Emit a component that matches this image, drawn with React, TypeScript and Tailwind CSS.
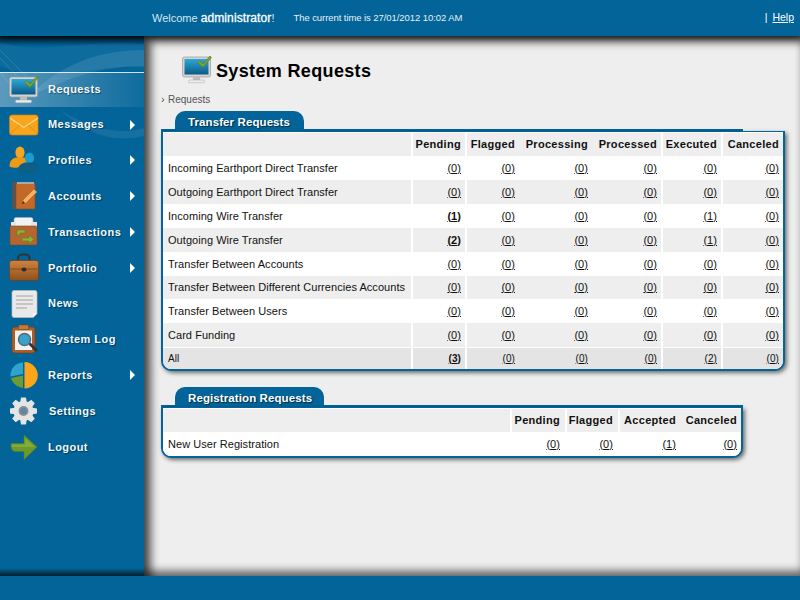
import React from 'react';

// inline icons for the sidebar, drawn on a 30x30 box
const MonitorIcon = ({ id }: { id: string }) => (
  <svg viewBox="0 0 30 30" className="w-full h-full">
    <defs>
      <linearGradient id={id} x1="0" y1="0" x2="0" y2="1">
        <stop offset="0" stopColor="#2ea8d8" />
        <stop offset="1" stopColor="#0b5a86" />
      </linearGradient>
    </defs>
    <rect x="0.5" y="2" width="28" height="20" rx="2" fill="#d4d4d4" stroke="#9a9a9a" strokeWidth="0.7" />
    <rect x="2.5" y="4" width="24" height="15.5" fill={`url(#${id})`} />
    <rect x="11" y="22" width="7" height="3.5" fill="#bdbdbd" />
    <rect x="6.5" y="25" width="16" height="2.8" rx="1" fill="#ececec" stroke="#a8a8a8" strokeWidth="0.5" />
    <path d="M17.5 5.5l3.5 3.5 7-8 1.5 1.5-8.5 10-5.5-5z" fill="#7aa32f" stroke="#4f7320" strokeWidth="0.5" />
  </svg>
);

const MailIcon = () => (
  <svg viewBox="0 0 30 30" className="w-full h-full">
    <rect x="0.5" y="5" width="28.5" height="20" rx="2.5" fill="#f7a51c" stroke="#d97f0c" strokeWidth="0.7" />
    <path d="M1 8l13.7 9.5L29 8" fill="none" stroke="#ffd57a" strokeWidth="1.3" />
    <path d="M1 24l10-9M29 24l-10-9" fill="none" stroke="#e08a12" strokeWidth="0.9" />
  </svg>
);

const UsersIcon = () => (
  <svg viewBox="0 0 30 30" className="w-full h-full">
    <ellipse cx="11" cy="7.5" rx="4.6" ry="6" fill="#f5a623" />
    <path d="M0.5 21c0-6 4-8 6.5-8.5h8c3 .5 4 2 4 4L12 22c-5 1-11 1-11.5-1z" fill="#ef9a16" />
    <ellipse cx="20.5" cy="13" rx="4.6" ry="5.6" fill="#1c9ccf" />
    <path d="M9 25c0-5 4.500-7 7.500-7.500h8c3 .5 5 3 5 7 0 2.500-4 3.500-10 3.500S9 28 9 25z" fill="#0d5f86" />
  </svg>
);

const BookIcon = () => (
  <svg viewBox="0 0 30 30" className="w-full h-full">
    <rect x="3" y="1" width="6" height="27" fill="#555" />
    <rect x="7" y="2" width="19" height="26" rx="1" fill="#c4682a" stroke="#8e4a1b" strokeWidth="0.6" />
    <rect x="8" y="1" width="17" height="2" fill="#a9a9a9" />
    <path d="M13 23l1-4 11-11 3 3-11 11z" fill="#f3b161" stroke="#a8611f" strokeWidth="0.5" />
    <path d="M13 23l1-3 2 2z" fill="#3a2a18" />
  </svg>
);

const TransferIcon = () => (
  <svg viewBox="0 0 30 30" className="w-full h-full">
    <rect x="5" y="0.500" width="19" height="12" rx="2" fill="#f2f2f2" stroke="#aaa" strokeWidth="0.6" />
    <rect x="2" y="5" width="5" height="7" fill="#e5e5e5" />
    <rect x="22" y="5" width="6" height="7" fill="#e5e5e5" />
    <rect x="1" y="9" width="27" height="19" rx="1.500" fill="#b4662e" stroke="#84471c" strokeWidth="0.6" />
    <path d="M8 13h8v3h-5v2H8zM13 21h7v-3l5 4.500-5 4V24h-7z" fill="#8ab33a" stroke="#557a1e" strokeWidth="0.5" />
  </svg>
);

const CaseIcon = ({ id }: { id: string }) => (
  <svg viewBox="0 0 30 30" className="w-full h-full">
    <defs>
      <linearGradient id={id} x1="0" y1="0" x2="0" y2="1">
        <stop offset="0" stopColor="#cf8440" />
        <stop offset="1" stopColor="#8f4f1d" />
      </linearGradient>
    </defs>
    <path d="M9 9V5.500C9 3 11 1.500 13 1.500h3.500C19 1.500 20.500 3 20.500 5.500V9" fill="none" stroke="#333" strokeWidth="1.8" />
    <rect x="0.500" y="7.500" width="29" height="20" rx="2.500" fill={`url(#${id})`} stroke="#6f3c14" strokeWidth="0.7" />
    <path d="M1 16h28" stroke="#7c4418" strokeWidth="0.8" />
    <ellipse cx="15" cy="16.500" rx="2.500" ry="2" fill="#2c2c2c" />
  </svg>
);

const NewsIcon = () => (
  <svg viewBox="0 0 30 30" className="w-full h-full">
    <path d="M3 3.500a2 2 0 012-2h21a2 2 0 012 2v21l-4 4H5a2 2 0 01-2-2z" fill="#e9e9e9" stroke="#bdbdbd" strokeWidth="0.7" />
    <path d="M7 7h17M7 11h17M7 15h17M7 19h11" stroke="#a3a3a3" strokeWidth="1.200" />
    <path d="M24 28.500v-4h4z" fill="#fff" />
  </svg>
);

const LogIcon = () => (
  <svg viewBox="0 0 30 30" className="w-full h-full">
    <rect x="3" y="3" width="23" height="26" rx="3" fill="#aa5e28" stroke="#7b4119" strokeWidth="0.7" />
    <rect x="6" y="6.500" width="17" height="19.500" fill="#f1f1f1" />
    <rect x="9.500" y="1" width="10" height="4.500" rx="1" fill="#c4793a" stroke="#7b4119" strokeWidth="0.5" />
    <path d="M21 20l6 6" stroke="#333" strokeWidth="2.800" strokeLinecap="round" />
    <circle cx="15.500" cy="15.500" r="6" fill="#36a3cc" stroke="#5b6b73" strokeWidth="1.500" />
  </svg>
);

const PieIcon = () => (
  <svg viewBox="0 0 30 30" className="w-full h-full">
    <path d="M15.500 2a13 13 0 010 26.500z" fill="#fba61a" />
    <path d="M14 2.500a12.500 12.500 0 00-12.500 12.500c0 .500 0 1 .1 1.500L14 14z" fill="#2ea3cf" />
    <path d="M14 15.500L2 18c1 5 6 9 12 10z" fill="#6f9a2e" />
  </svg>
);

const GearIcon = () => (
  <svg viewBox="0 0 30 30" className="w-full h-full">
    {[0, 45, 90, 135, 180, 225, 270, 315].map((a) => (
      <path key={a} d="M12 1.500h5l1 6h-7z" fill="#e4e4e4" transform={`rotate(${a} 14.500 15)`} />
    ))}
    <circle cx="14.500" cy="15" r="10" fill="#e4e4e4" />
    <circle cx="14.500" cy="15" r="5" fill="#8a8f94" />
    <circle cx="14.500" cy="15" r="3.200" fill="#5f87a0" />
  </svg>
);

const ArrowIcon = () => (
  <svg viewBox="0 0 30 30" className="w-full h-full">
    <path d="M2 11.500h13V3L28 15 15 27.500V19.500H6c-2.500 0-4.500-3-4-8z" fill="#6e9a2c" stroke="#557d20" strokeWidth="0.6" strokeLinejoin="round" />
    <path d="M3 12.500h13V6l10 9H3z" fill="#8ab33f" opacity="0.7" />
  </svg>
);

const menu = [
  { label: 'Requests', icon: <MonitorIcon id="mon1" />, h: 'h-[35px]', active: true, sub: false, ml: 'ml-[9px]' },
  { label: 'Messages', icon: <MailIcon />, h: 'h-[35px]', active: false, sub: true, ml: 'ml-[9px]' },
  { label: 'Profiles', icon: <UsersIcon />, h: 'h-[36px]', active: false, sub: true, ml: 'ml-[9px]' },
  { label: 'Accounts', icon: <BookIcon />, h: 'h-[36px]', active: false, sub: true, ml: 'ml-[9px]' },
  { label: 'Transactions', icon: <TransferIcon />, h: 'h-[36px]', active: false, sub: true, ml: 'ml-[9px]' },
  { label: 'Portfolio', icon: <CaseIcon id="case1" />, h: 'h-[36px]', active: false, sub: true, ml: 'ml-[9px]' },
  { label: 'News', icon: <NewsIcon />, h: 'h-[35px]', active: false, sub: false, ml: 'ml-[9px]' },
  { label: 'System Log', icon: <LogIcon />, h: 'h-[36px]', active: false, sub: false, ml: 'ml-[10px]' },
  { label: 'Reports', icon: <PieIcon />, h: 'h-[36px]', active: false, sub: true, ml: 'ml-[9px]' },
  { label: 'Settings', icon: <GearIcon />, h: 'h-[36px]', active: false, sub: false, ml: 'ml-[10px]' },
  { label: 'Logout', icon: <ArrowIcon />, h: 'h-[36px]', active: false, sub: false, ml: 'ml-[9px]' },
];

type Col = { name: string; width: string; sep: boolean; pr: string };

const transferCols: Col[] = [
  { name: 'Pending', width: 'w-[54px]', sep: true, pr: 'pr-[4px]' },
  { name: 'Flagged', width: 'w-[54px]', sep: true, pr: 'pr-[5px]' },
  { name: 'Processing', width: 'w-[71px]', sep: false, pr: 'pr-[3px]' },
  { name: 'Processed', width: 'w-[71px]', sep: false, pr: 'pr-[4px]' },
  { name: 'Executed', width: 'w-[60px]', sep: true, pr: 'pr-[4px]' },
  { name: 'Canceled', width: 'w-[61px]', sep: true, pr: 'pr-[4px]' },
];

const transferRows = [
  { label: 'Incoming Earthport Direct Transfer', vals: [0, 0, 0, 0, 0, 0], h: 'h-[24px]' },
  { label: 'Outgoing Earthport Direct Transfer', vals: [0, 0, 0, 0, 0, 0], h: 'h-[24px]' },
  { label: 'Incoming Wire Transfer', vals: [1, 0, 0, 0, 1, 0], h: 'h-[24px]' },
  { label: 'Outgoing Wire Transfer', vals: [2, 0, 0, 0, 1, 0], h: 'h-[24px]' },
  { label: 'Transfer Between Accounts', vals: [0, 0, 0, 0, 0, 0], h: 'h-[24px]' },
  { label: 'Transfer Between Different Currencies Accounts', vals: [0, 0, 0, 0, 0, 0], h: 'h-[23px]' },
  { label: 'Transfer Between Users', vals: [0, 0, 0, 0, 0, 0], h: 'h-[24px]' },
  { label: 'Card Funding', vals: [0, 0, 0, 0, 0, 0], h: 'h-[24px]' },
];

const regCols: Col[] = [
  { name: 'Pending', width: 'w-[55px]', sep: true, pr: 'pr-[5px]' },
  { name: 'Flagged', width: 'w-[53px]', sep: true, pr: 'pr-[5px]' },
  { name: 'Accepted', width: 'w-[61px]', sep: true, pr: 'pr-[4px]' },
  { name: 'Canceled', width: 'w-[61px]', sep: false, pr: 'pr-[4px]' },
];

const Count = ({ value, bold }: { value: number; bold?: boolean }) => (
  <a href="#" className={`underline text-[#111] ${bold ? 'font-bold' : ''}`}>({value})</a>
);

const RequestTable = ({
  title,
  tabWidth,
  cols,
  rows,
  total,
  cardWidth,
}: {
  title: string;
  tabWidth: string;
  cols: Col[];
  rows: { label: string; vals: number[]; h: string }[];
  total?: number[];
  cardWidth: string;
}) => (
  <div className={cardWidth}>
    <div className={`${tabWidth} h-[18px] ml-[14px] rounded-t-[10px] bg-[#026499] pl-[13px] pt-[6px] flex items-center text-[11.500px] tracking-[0.1px] font-bold text-white [text-shadow:1px_1px_1px_rgba(0,0,0,0.6)]`}>
      {title}
    </div>
    <div className="w-[582px] h-[2px] bg-[#026499]" />
    <div className="rounded-b-[10px] border-2 border-t border-[#026499] bg-white pt-px shadow-[2px_2px_4px_rgba(0,0,0,0.55)] overflow-hidden">
      <table className="w-full border-collapse table-fixed text-[11px] tracking-[0.05px] text-[#111]">
        <thead>
          <tr className="h-[23px]">
            <th className="bg-[#eeeeee]" />
            {cols.map((c) => (
              <th key={c.name} className={`${c.width} ${c.pr} bg-[#eeeeee] text-right font-bold tracking-[0.3px] ${c.sep ? 'border-l-2 border-white' : ''}`}>
                {c.name}
              </th>
            ))}
          </tr>
        </thead>
        <tbody>
          {rows.map((row, i) => (
            <tr key={row.label} className={`${row.h} ${i % 2 ? 'bg-[#eeeeee]' : 'bg-white'}`}>
              <td className="pl-[5px] whitespace-nowrap">{row.label}</td>
              {row.vals.map((v, j) => (
                <td key={j} className={`${cols[j].pr} text-right ${cols[j].sep ? 'border-l-2 border-white' : ''}`}>
                  <Count value={v} bold={j === 0 && v > 0} />
                </td>
              ))}
            </tr>
          ))}
          {total && (
            <tr className="h-[22px] bg-[#e4e4e4] border-t border-white text-[10px]">
              <td className="pl-[5px]">All</td>
              {total.map((v, j) => (
                <td key={j} className={`${cols[j].pr} text-right ${cols[j].sep ? 'border-l-2 border-white' : ''}`}>
                  <Count value={v} bold={j === 0} />
                </td>
              ))}
            </tr>
          )}
        </tbody>
      </table>
    </div>
  </div>
);

export default function App() {
  return (
    <div className="w-[800px] h-[600px] flex flex-col overflow-hidden bg-[#026499] font-['Liberation_Sans',Arial,sans-serif]">
      {/* Top bar */}
      <header className="relative z-10 h-[36px] shrink-0 bg-[#026499] flex items-center pl-[152px] pr-[6px] shadow-[0_2px_6px_rgba(0,0,0,0.8)]">
        <span className="text-[11px] text-[#d5e8f2]">
          Welcome <b className="text-[12px] text-white font-normal tracking-[0.1px] [-webkit-text-stroke:0.3px_white]">administrator</b>!
        </span>
        <span className="ml-[19px] text-[9.500px] tracking-[-0.07px] text-[#e6f0f5]">The current time is 27/01/2012 10:02 AM</span>
        <span className="ml-auto text-[10.500px] text-white">
          | <a href="#" className="ml-[2px] underline">Help</a>
        </span>
      </header>

      <div className="flex-1 flex min-h-0">
        {/* Sidebar */}
        <nav className="relative w-[144px] shrink-0 pt-[36px] bg-[#026499] overflow-hidden">
          <svg viewBox="0 0 144 110" className="absolute left-0 top-0 w-[144px] h-[110px]">
            <path d="M0 6C40 20 90 2 144 8V32C100 26 50 50 0 30z" fill="#fff" opacity="0.05" />
            <path d="M30 60C60 28 100 14 144 14V30C100 30 70 42 30 60z" fill="#fff" opacity="0.1" />
            <path d="M0 14L40 54M0 22L34 58M0 36L24 66" stroke="#fff" strokeWidth="0.6" opacity="0.2" />
            <path d="M60 74C90 92 120 100 144 92V100C110 108 85 96 60 74z" fill="#fff" opacity="0.08" />
          </svg>
          <div className="absolute left-0 top-0 w-full h-[10px] bg-gradient-to-b from-black/70 to-transparent" />
          <div className="absolute left-0 bottom-0 w-full h-[8px] bg-gradient-to-t from-black/70 to-transparent" />
          <ul className="relative">
            {menu.map((item) => (
              <li
                key={item.label}
                className={`${item.h} flex items-center pl-[9px] ${item.active ? 'shadow-[inset_0_1px_0_rgba(255,255,255,0.8)] bg-gradient-to-r from-white/35 to-white/5' : ''}`}
              >
                <span className="w-[30px] h-[30px] shrink-0">{item.icon}</span>
                <span className={`${item.ml} text-[11px] font-bold tracking-[0.45px] text-[#f2f8fb] [text-shadow:1px_1px_1px_rgba(0,0,0,0.4)]`}>
                  {item.label}
                </span>
                {item.sub && (
                  <span className="ml-auto mr-[9px] w-0 h-0 border-y-[5px] border-y-transparent border-l-[5px] border-l-white" />
                )}
              </li>
            ))}
          </ul>
        </nav>

        {/* Content */}
        <main className="flex-1 min-w-0 bg-[#eeeeee] pl-[17px] shadow-[inset_9px_8px_9px_-2px_rgba(0,0,0,0.65),inset_0_-8px_9px_-3px_rgba(0,0,0,0.6)]">
          <div className="flex items-center gap-[4px] h-[32px] mt-[18px] ml-[21px]">
            <span className="w-[30px] h-[30px] shrink-0"><MonitorIcon id="mon2" /></span>
            <h1 className="pt-[2px] text-[18px] font-bold tracking-[0.35px] text-black">System Requests</h1>
          </div>
          <div className="mt-[7px] h-[12px] flex items-center text-[10px] text-[#555]">
            <span className="w-[7px] text-[11px] leading-none">›</span>Requests
          </div>
          <div className="mt-[6px] flex flex-col gap-[16px]">
            <RequestTable
              title="Transfer Requests"
              tabWidth="w-[129px]"
              cardWidth="w-[624px]"
              cols={transferCols}
              rows={transferRows}
              total={[3, 0, 0, 0, 2, 0]}
            />
            <RequestTable
              title="Registration Requests"
              tabWidth="w-[149px]"
              cardWidth="w-[582px]"
              cols={regCols}
              rows={[{ label: 'New User Registration', vals: [0, 0, 1, 0], h: 'h-[24px]' }]}
            />
          </div>
        </main>
      </div>

      <footer className="h-[24px] shrink-0 bg-[#026499]" />
    </div>
  );
}
